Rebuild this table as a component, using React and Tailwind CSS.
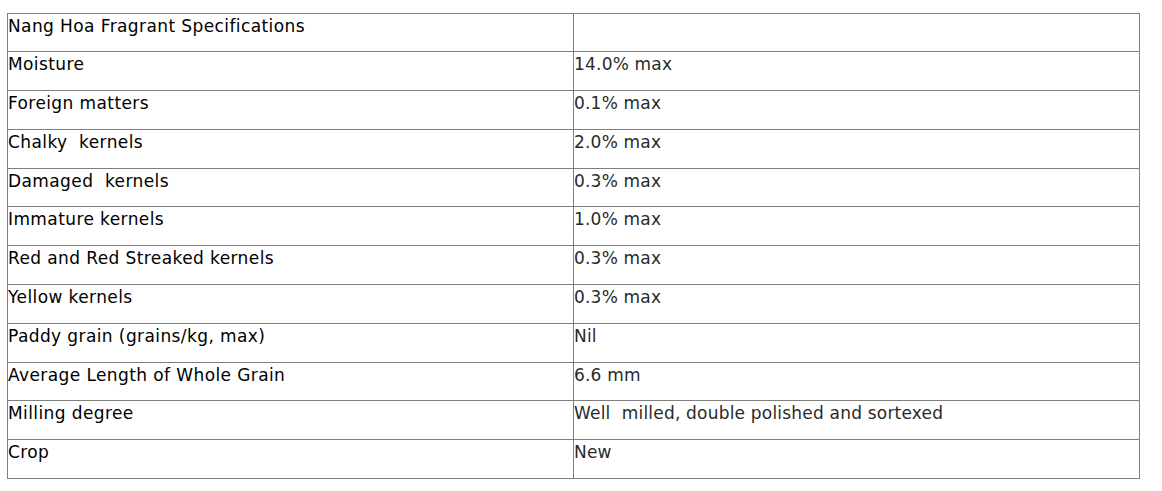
const ROWS = [
  ['Nang Hoa Fragrant Specifications', '', 'h-[38px]'],
  ['Moisture', '14.0% max', 'h-[39px]'],
  ['Foreign matters', '0.1% max', 'h-[39px]'],
  ['Chalky  kernels', '2.0% max', 'h-[39px]'],
  ['Damaged  kernels', '0.3% max', 'h-[38px]'],
  ['Immature kernels', '1.0% max', 'h-[39px]'],
  ['Red and Red Streaked kernels', '0.3% max', 'h-[39px]'],
  ['Yellow kernels', '0.3% max', 'h-[39px]'],
  ['Paddy grain (grains/kg, max)', 'Nil', 'h-[39px]'],
  ['Average Length of Whole Grain', '6.6 mm', 'h-[38px]'],
  ['Milling degree', 'Well  milled, double polished and sortexed', 'h-[39px]'],
  ['Crop', 'New', 'h-[39px]'],
]

export default function App() {
  return (
    <div className="w-[1162px] h-[491px] bg-white pt-[13px] pl-[7px] font-['DejaVu_Sans',sans-serif]">
      <div className="w-[1133px] border-t border-l border-r border-[#7f7f7f]">
        {ROWS.map(([label, value, h], i) => (
          <div key={i} className={`flex border-b border-[#7f7f7f] ${h}`}>
            <div className="w-[566px] border-r border-[#7f7f7f] text-[17px] leading-[20px] pt-[2px] tracking-[0.4px] text-black whitespace-pre">
              {label}
            </div>
            <div className="flex-1 text-[17px] leading-[20px] pt-[2px] tracking-[0.2px] text-[#2a2a2a] whitespace-pre">
              {value}
            </div>
          </div>
        ))}
      </div>
    </div>
  )
}
